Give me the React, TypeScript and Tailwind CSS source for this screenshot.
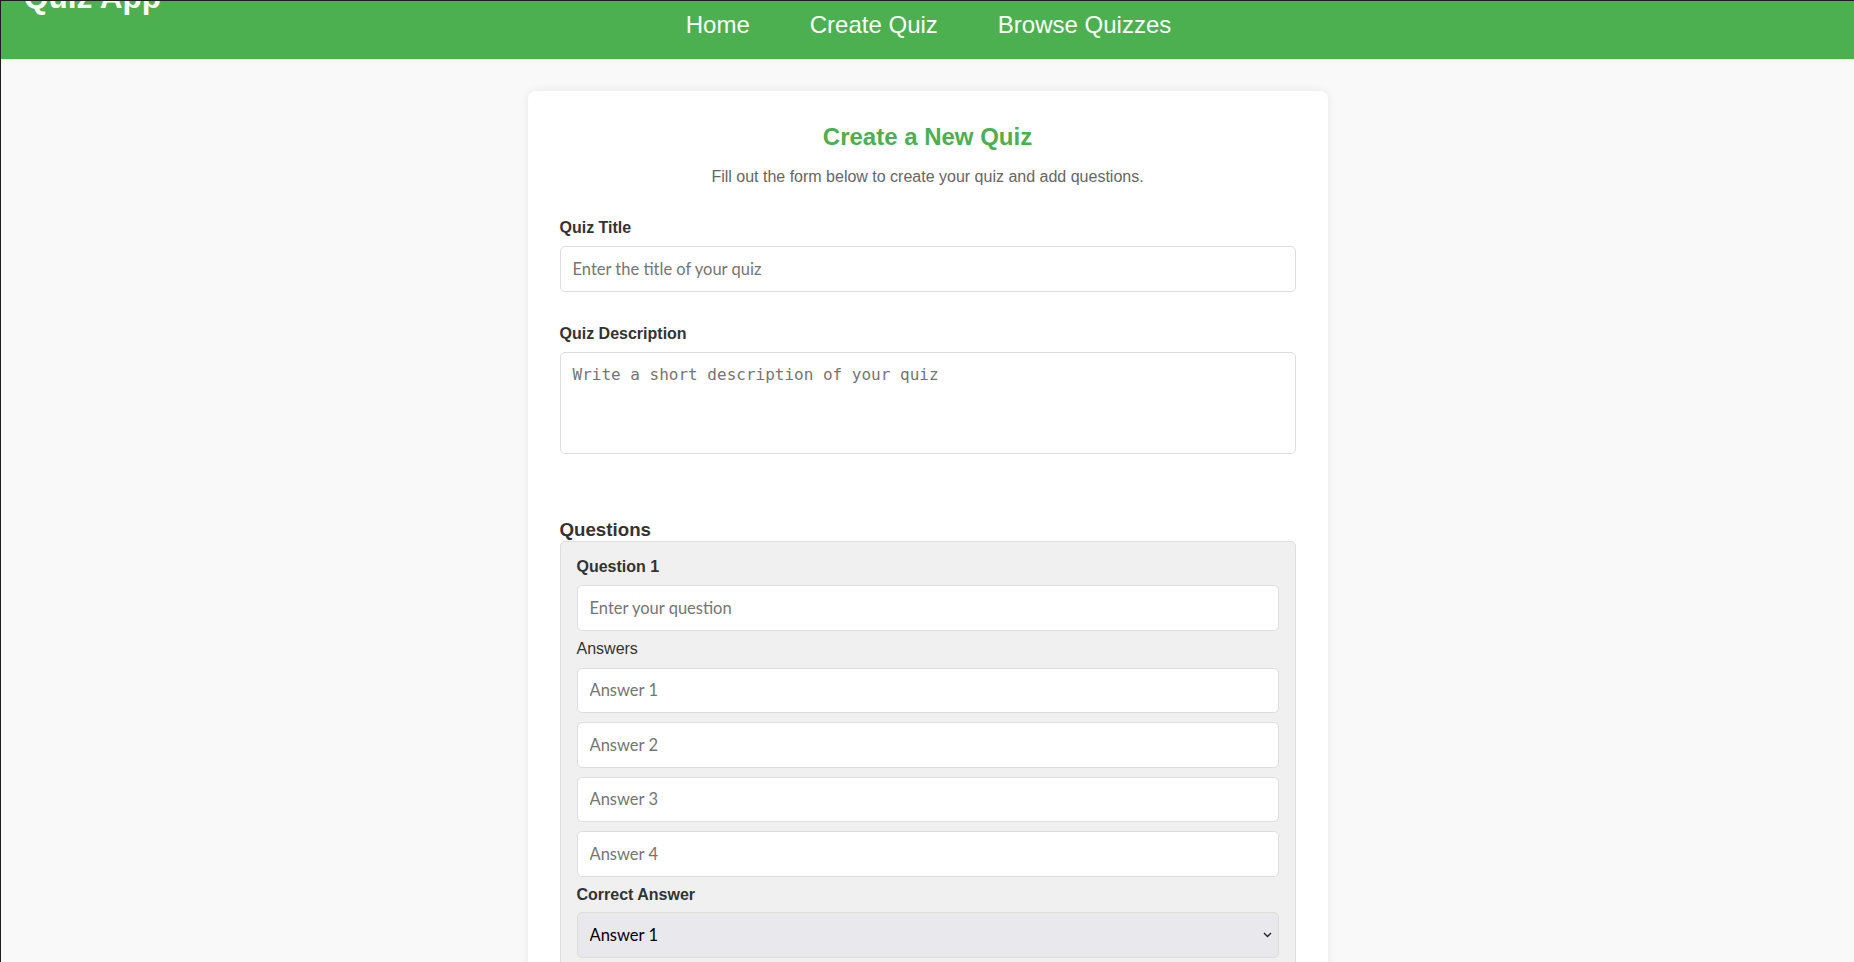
import React from "react";

const sans = "font-['Liberation_Sans',Arial,sans-serif]";
const inputFont = "font-['Lato','Noto_Sans',sans-serif]";

function TextInput({ placeholder, className = "" }: { placeholder: string; className?: string }) {
  return (
    <input
      type="text"
      placeholder={placeholder}
      className={`block w-full h-[45.5px] px-[12px] bg-white border border-[#dddddd] rounded-[5px] text-[16.5px] text-[#333] ${inputFont} placeholder:text-[#757575] outline-none ${className}`}
    />
  );
}

export default function App() {
  return (
    <div className={`min-h-screen bg-[#f9f9f9] border-t border-l border-[#1e1e1e] ${sans}`}>
      <header className="relative h-[57.6px] bg-[#4CAF50] overflow-hidden">
        <h1 className="absolute left-[23px] top-[-19px] text-[31.5px] leading-none font-bold text-white">
          Quiz App
        </h1>
        <nav className="flex justify-center gap-[60px] pt-[10px] pl-[2px]">
          <a className="text-[24px] leading-[28px] text-white" href="#">Home</a>
          <a className="text-[24px] leading-[28px] text-white" href="#">Create Quiz</a>
          <a className="text-[24px] leading-[28px] text-white" href="#">Browse Quizzes</a>
        </nav>
      </header>

      <main className="pb-10">
        <div className="mx-auto mt-8 w-[800px] bg-white rounded-[8px] shadow-[0_0_10px_rgba(0,0,0,0.08)] px-8 pt-8 pb-8">
          <h2 className="text-center text-[24px] leading-[27.6px] font-bold text-[#4CAF50]">
            Create a New Quiz
          </h2>
          <p className="mt-[18px] text-center text-[16px] leading-[18.4px] text-[#666]">
            Fill out the form below to create your quiz and add questions.
          </p>

          <label className="block mt-[32px] text-[16px] leading-[18.4px] font-bold text-[#333]">
            Quiz Title
          </label>
          <TextInput placeholder="Enter the title of your quiz" className="mt-[9px]" />

          <label className="block mt-[33px] text-[16px] leading-[18.4px] font-bold text-[#333]">
            Quiz Description
          </label>
          <textarea
            placeholder="Write a short description of your quiz"
            className="block mt-[9px] w-full h-[102px] px-[12px] py-[12px] bg-white border border-[#dddddd] rounded-[5px] text-[16px] leading-[19px] font-['DejaVu_Sans_Mono',monospace] placeholder:text-[#757575] outline-none resize-none"
          />

          <h3 className="mt-[65.5px] text-[18.72px] leading-[21.5px] font-bold text-[#333]">Questions</h3>

          <div className="bg-[#f0f0f0] border border-[#dddddd] rounded-[5px] px-4 pt-[16px] pb-4">
            <label className="block text-[16px] leading-[18.4px] font-bold text-[#333]">Question 1</label>
            <TextInput placeholder="Enter your question" className="mt-[9px]" />

            <label className="block mt-[9.5px] text-[16px] leading-[18.4px] text-[#333]">Answers</label>
            <TextInput placeholder="Answer 1" className="mt-[9px]" />
            <TextInput placeholder="Answer 2" className="mt-[9px]" />
            <TextInput placeholder="Answer 3" className="mt-[9px]" />
            <TextInput placeholder="Answer 4" className="mt-[9px]" />

            <label className="block mt-[9px] text-[16px] leading-[18.4px] font-bold text-[#333]">
              Correct Answer
            </label>
            <div className="relative mt-[8px]">
              <select
                className={`block w-full h-[46px] appearance-none px-[12px] bg-[#e9e9ed] border border-[#dddddd] rounded-[5px] text-[16.5px] text-black ${inputFont} outline-none`}
                defaultValue="0"
              >
                <option value="0">Answer 1</option>
                <option value="1">Answer 2</option>
                <option value="2">Answer 3</option>
                <option value="3">Answer 4</option>
              </select>
              <svg
                className="pointer-events-none absolute right-[7px] top-1/2 -translate-y-1/2"
                width="9"
                height="6"
                viewBox="0 0 9 6"
                fill="none"
              >
                <path d="M1 1 L4.5 4.5 L8 1" stroke="#222" strokeWidth="1.4" />
              </svg>
            </div>
          </div>

          <button className="mt-4 px-4 py-2 bg-[#4CAF50] text-white rounded-[5px] text-[16px]">
            Add Another Question
          </button>
          <button className="mt-4 block w-full px-4 py-3 bg-[#4CAF50] text-white rounded-[5px] text-[16px]">
            Create Quiz
          </button>
        </div>
      </main>
    </div>
  );
}
